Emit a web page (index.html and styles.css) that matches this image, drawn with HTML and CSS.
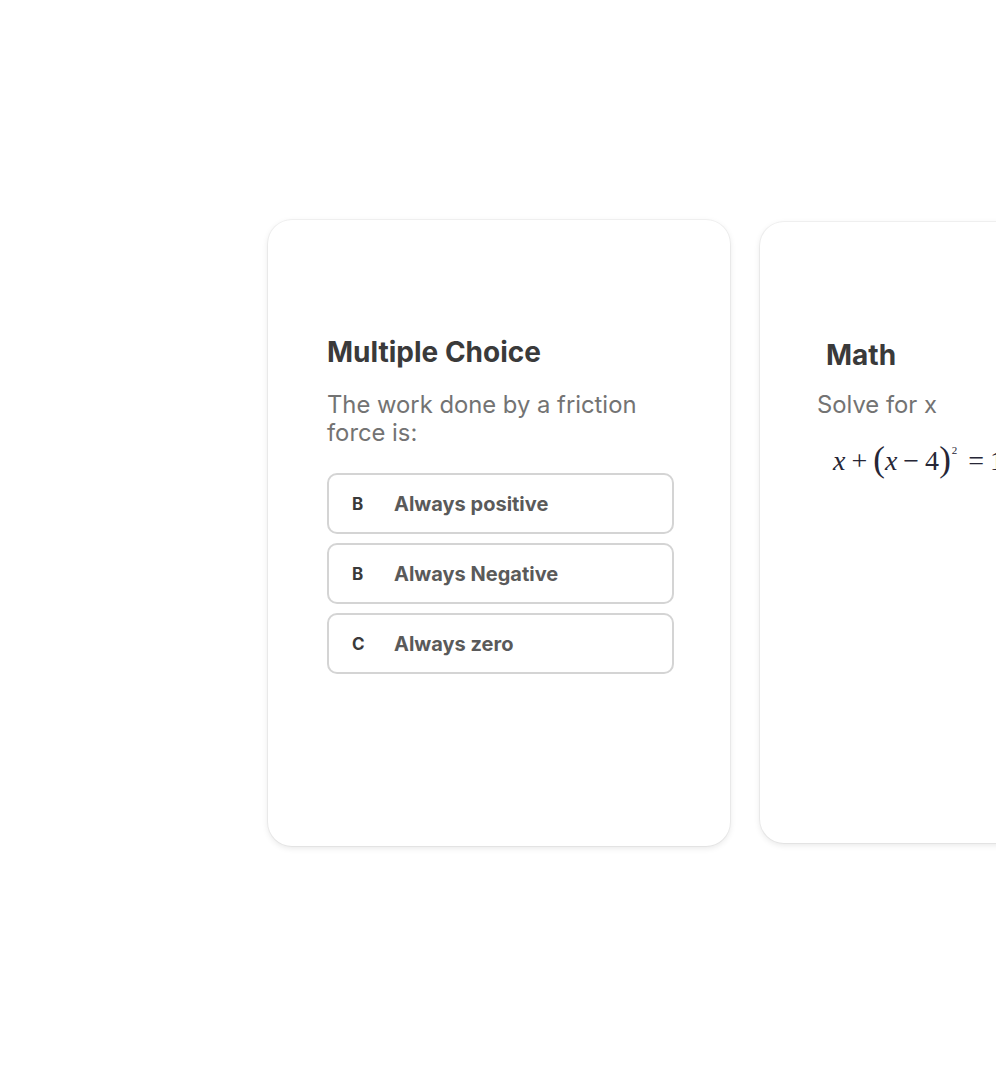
FILE: index.html
```html
<!DOCTYPE html>
<html lang="en">
<head>
<meta charset="utf-8">
<title>Question cards</title>
<link rel="stylesheet" href="styles.css">
</head>
<body>
<main class="carousel">
  <section class="card card-mc">
    <h2 class="card-title">Multiple Choice</h2>
    <p class="card-prompt">The work done by a friction force is:</p>
    <ul class="options">
      <li class="option"><span class="option-key">B</span><span class="option-text">Always positive</span></li>
      <li class="option"><span class="option-key">B</span><span class="option-text">Always Negative</span></li>
      <li class="option"><span class="option-key">C</span><span class="option-text">Always zero</span></li>
    </ul>
  </section>
  <section class="card card-math">
    <h2 class="card-title math-title">Math</h2>
    <p class="card-prompt">Solve for x</p>
    <div class="equation"><i>x</i> + <span class="paren">(</span><i>x</i> &minus; 4<span class="paren">)</span><sup>2</sup> = 1</div>
  </section>
</main>
</body>
</html>
```

FILE: styles.css
```css
* { box-sizing: border-box; }
html, body {
  margin: 0;
  padding: 0;
  background: #ffffff;
  overflow: hidden;
  width: 996px;
  height: 1088px;
}
body {
  font-family: Inter, "Noto Sans", sans-serif;
  color: #3a3a3a;
}
.carousel {
  display: flex;
  align-items: flex-start;
  gap: 30px;
  padding: 220px 0 0 268px;
  width: max-content;
}
.card {
  flex: 0 0 auto;
  width: 462px;
  background: #fff;
  border-radius: 24px;
  box-shadow: 0 0 0 1px rgba(0,0,0,0.045), 0 2px 6px rgba(0,0,0,0.10);
}
.card-mc {
  height: 626px;
  padding: 115px 55px 0 59px;
}
.card-math {
  height: 621px;
  margin-top: 2px;
  padding: 116px 20px 0 57px;
}
.card-title {
  margin: 0;
  font-size: 28px;
  line-height: 34px;
  font-weight: 700;
  color: #3a3a3a;
}
.math-title {
  margin-left: 9px;
}
.card-prompt {
  margin: 22px 0 0;
  font-size: 23.8px;
  line-height: 28px;
  font-weight: 400;
  color: #737373;
  width: 340px;
}
.card-math .card-prompt {
  margin-top: 19px;
}
.options {
  list-style: none;
  margin: 26px 0 0;
  padding: 0;
  display: flex;
  flex-direction: column;
  gap: 9px;
  width: 347px;
}
.option {
  height: 61px;
  border: 2px solid #d4d4d4;
  border-radius: 10px;
  display: flex;
  align-items: center;
  padding-left: 23px;
}
.option-key {
  width: 42px;
  font-size: 17px;
  font-weight: 700;
  color: #3a3a3a;
}
.option-text {
  font-size: 20px;
  font-weight: 700;
  color: #5a5a5a;
}
.equation {
  margin: 11px 0 0 16px;
  font-family: "Liberation Serif", "Times New Roman", serif;
  font-size: 28px;
  line-height: 40px;
  color: #262636;
  white-space: nowrap;
  word-spacing: -1px;
}
.equation i {
  font-style: italic;
}
.paren {
  font-size: 35px;
  display: inline-block;
  transform: translateY(1px);
}
.equation sup {
  font-size: 11px;
  vertical-align: 16px;
  margin-left: 1px;
  margin-right: 5px;
}
```
